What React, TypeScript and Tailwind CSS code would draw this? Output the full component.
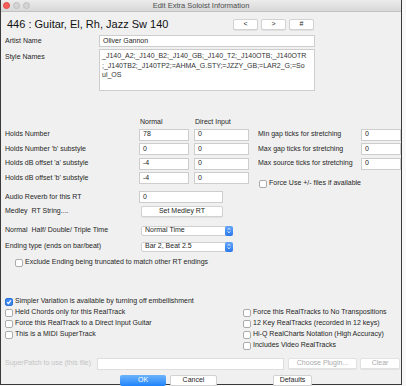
import React from 'react';

const Box = ({ w, children, className = '' }: { w: string; children?: React.ReactNode; className?: string }) => (
  <div className={`${w} h-[12px] bg-white border border-[#cdcdcd] flex items-center px-[3px] ${className}`}>{children}</div>
);

const Check = ({ checked = false }: { checked?: boolean }) =>
  checked ? (
    <span className="w-[8px] h-[8px] rounded-[2px] bg-[#3b87f3] border border-[#2f72d6] flex items-center justify-center shrink-0">
      <svg width="6" height="6" viewBox="0 0 6 6">
        <path d="M1 3.1 L2.4 4.5 L5 1.3" stroke="white" strokeWidth="1.2" fill="none" />
      </svg>
    </span>
  ) : (
    <span className="w-[8px] h-[8px] rounded-[2px] bg-white border border-[#ababab] shrink-0" />
  );

const CheckRow = ({ label, checked }: { label: string; checked?: boolean }) => (
  <div className="h-[10px] flex items-center gap-[2px]">
    <Check checked={checked} />
    <span className="whitespace-nowrap">{label}</span>
  </div>
);

const Btn = ({ w, children, className = '' }: { w: string; children: React.ReactNode; className?: string }) => (
  <div
    className={`${w} h-[11px] bg-white rounded-[2px] border border-[#d2d2d2] shadow-[0_0.5px_0.5px_rgba(0,0,0,0.12)] flex items-center justify-center ${className}`}
  >
    {children}
  </div>
);

const Select = ({ value }: { value: string }) => (
  <div className="w-[92px] h-[10px] bg-white border border-[#d0d0d0] rounded-[2px] flex items-center">
    <span className="pl-[3px] flex-1">{value}</span>
    <span className="w-[8px] h-[10px] -mr-px rounded-[2px] bg-gradient-to-b from-[#63a6f8] to-[#2c78ea] flex flex-col items-center justify-center gap-[1px]">
      <svg width="4" height="2" viewBox="0 0 4 2">
        <path d="M0.4 1.8 L2 0.3 L3.6 1.8" stroke="white" strokeWidth="0.8" fill="none" />
      </svg>
      <svg width="4" height="2" viewBox="0 0 4 2">
        <path d="M0.4 0.2 L2 1.7 L3.6 0.2" stroke="white" strokeWidth="0.8" fill="none" />
      </svg>
    </span>
  </div>
);

const holds = [
  { label: 'Holds Number', normal: '78', direct: '0' },
  { label: "Holds Number 'b' substyle", normal: '0', direct: '0' },
  { label: "Holds dB offset 'a' substyle", normal: '-4', direct: '0' },
  { label: "Holds dB offset 'b' substyle", normal: '-4', direct: '0' },
];

const stretch = ['Min gap ticks for stretching', 'Max gap ticks for stretching', 'Max source ticks for stretching'];

export default function App() {
  return (
    <div className="w-[406px] h-[386px] bg-[#f8f8f8] font-['Liberation_Sans',Arial,sans-serif] text-[7px] text-[#262626] overflow-hidden">
      <div className="w-[402px] h-[385px] bg-[#f0f0f0] border-x border-b border-[#3a3a3a] flex flex-col">
        {/* Title bar */}
        <div className="h-[12px] bg-gradient-to-b from-[#ececec] to-[#d8d8d8] border-b border-[#c2c2c2] grid grid-cols-[1fr_auto_1fr] items-center">
          <div className="flex gap-[3px] pl-[2px]">
            <span className="w-[7px] h-[7px] rounded-full bg-[#fc5f57] border border-[#df4a42]" />
            <span className="w-[7px] h-[7px] rounded-full bg-[#d4d4d4] border border-[#c0c0c0]" />
            <span className="w-[7px] h-[7px] rounded-full bg-[#d4d4d4] border border-[#c0c0c0]" />
          </div>
          <div className="text-[7.5px] text-[#4d4d4d]">Edit Extra Soloist Information</div>
          <div />
        </div>

        <div className="flex flex-col pl-[4px]">
          {/* Heading */}
          <div className="mt-[7px] w-[309px] h-[11px] flex items-center">
            <span className="ml-[2px] text-[11px] text-[#111]">446 : Guitar, El, Rh, Jazz Sw 140</span>
            <div className="ml-auto flex gap-[3px]">
              <Btn w="w-[25px]">&lt;</Btn>
              <Btn w="w-[25px]">&gt;</Btn>
              <Btn w="w-[25px]">#</Btn>
            </div>
          </div>

          {/* Artist */}
          <div className="mt-[5px] flex items-center">
            <span className="w-[94px]">Artist Name</span>
            <Box w="w-[216px]" className="h-[12px]">Oliver Gannon</Box>
          </div>

          {/* Style names */}
          <div className="mt-[2px] flex">
            <span className="w-[94px] pt-[3px]">Style Names</span>
            <div className="w-[216px] h-[42px] bg-white border border-[#cdcdcd] pl-[2px] pt-[1px] leading-[9.5px] text-[#333]">
              <div>_J140_A2;_J140_B2;_J140_GB;_J140_T2;_J140OTB;_J140OTR</div>
              <div>;_J140TB2;_J140TP2;=AHMA_G.STY;=JZZY_GB;=LAR2_G;=So</div>
              <div>ul_OS</div>
            </div>
          </div>

          {/* Holds + stretching */}
          <div className="mt-[27px] flex">
            <div className="flex flex-col">
              <div className="h-[8px] flex items-center">
                <span className="w-[135px]" />
                <span className="w-[55px]">Normal</span>
                <span>Direct Input</span>
              </div>
              {holds.map((h) => (
                <div key={h.label} className="mt-[2.5px] h-[12px] flex items-center">
                  <span className="w-[134px]">{h.label}</span>
                  <Box w="w-[50px]">{h.normal}</Box>
                  <Box w="w-[55px]" className="ml-[5px]">{h.direct}</Box>
                </div>
              ))}
            </div>
            <div className="ml-[9px] flex flex-col pt-[10.5px]">
              {stretch.map((s, i) => (
                <div key={s} className={`h-[12px] flex items-center ${i > 0 ? 'mt-[2.5px]' : ''}`}>
                  <span className="w-[103px]">{s}</span>
                  <Box w="w-[40px]">0</Box>
                </div>
              ))}
              <div className="mt-[9px] ml-[1px]">
                <CheckRow label="Force Use +/- files if available" />
              </div>
            </div>
          </div>

          {/* Reverb / medley / time */}
          <div className="mt-[2.5px] h-[12px] flex items-center">
            <span className="w-[134px]">Audio Reverb for this RT</span>
            <Box w="w-[84px]">0</Box>
          </div>
          <div className="mt-[2.5px] h-[12px] flex items-center">
            <span className="w-[136px]">Medley&nbsp; RT String....</span>
            <Btn w="w-[82px]">Set Medley RT</Btn>
          </div>
          <div className="mt-[8px] h-[10px] flex items-center">
            <span className="w-[136px]">Normal&nbsp; Half/ Double/ Triple Time</span>
            <Select value="Normal Time" />
          </div>
          <div className="mt-[6px] h-[10px] flex items-center">
            <span className="w-[136px]">Ending type (ends on bar/beat)</span>
            <Select value="Bar 2, Beat 2.5" />
          </div>
          <div className="mt-[6px] ml-[10px]">
            <CheckRow label="Exclude Ending being truncated to match other RT endings" />
          </div>

          {/* Flags */}
          <div className="mt-[29px] flex">
            <div className="w-[238px] flex flex-col gap-[1px]">
              <CheckRow checked label="Simpler Variation is available by turning off embellishment" />
              <CheckRow label="Held Chords only for this RealTrack" />
              <CheckRow label="Force this RealTrack to a Direct Input Guitar" />
              <CheckRow label="This is a MIDI SuperTrack" />
            </div>
            <div className="mt-[11px] flex flex-col gap-[1px]">
              <CheckRow label="Force this RealTracks to No Transpositions" />
              <CheckRow label="12 Key RealTracks (recorded in 12 keys)" />
              <CheckRow label="Hi-Q RealCharts Notation (High Accuracy)" />
              <CheckRow label="Includes Video RealTracks" />
            </div>
          </div>

          {/* SuperPatch */}
          <div className="mt-[7px] h-[12px] flex items-center">
            <span className="w-[92px] text-[#c4c4c4]">SuperPatch to use (this file)</span>
            <Box w="w-[187px]" className="border-[#dedede]" />
            <Btn w="w-[69px]" className="ml-[4px] text-[#aaaaaa] border-[#e2e2e2]">Choose Plugin...</Btn>
            <Btn w="w-[40px]" className="ml-[3px] text-[#aaaaaa] border-[#e2e2e2]">Clear</Btn>
          </div>

          {/* Buttons */}
          <div className="mt-[5px] h-[12px] flex items-center">
            <div className="ml-[115px] w-[46px] h-[11px] rounded-[2px] bg-gradient-to-b from-[#6cb4fb] to-[#1c83fb] text-white flex items-center justify-center">
              OK
            </div>
            <Btn w="w-[47px]" className="ml-[4px]">Cancel</Btn>
            <Btn w="w-[39px]" className="ml-[56px]">Defaults</Btn>
          </div>
        </div>
      </div>
    </div>
  );
}
